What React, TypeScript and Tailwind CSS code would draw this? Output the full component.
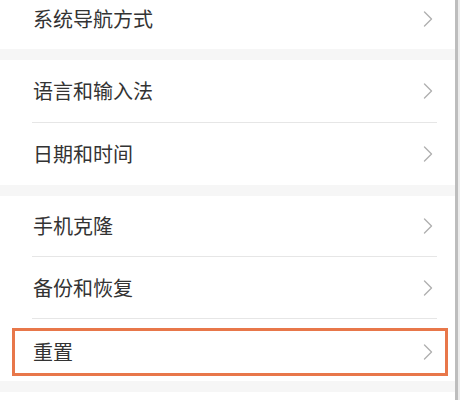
import React from "react";

const Chevron = () => (
  <svg width="10" height="16" viewBox="0 0 10 16" className="shrink-0">
    <path d="M1.5 1 L8.5 8 L1.5 15" fill="none" stroke="#b0b0b0" strokeWidth="1.4" strokeLinecap="round" strokeLinejoin="round" />
  </svg>
);

function Row({ label, h, pb = "", divider = false, children }: { label: string; h: string; pb?: string; divider?: boolean; children?: React.ReactNode }) {
  return (
    <div className="relative bg-white">
      <div className={`flex items-center justify-between pl-[33px] pr-[22px] ${h} ${pb}`}>
        <span className="text-[20px] leading-none text-[#333333]">{label}</span>
        <Chevron />
      </div>
      {divider && <div className="ml-[32px] mr-[18px] h-px bg-[#e6e6e6]" />}
      {children}
    </div>
  );
}

export default function App() {
  return (
    <div className="flex w-[460px] h-[400px] overflow-hidden bg-white" style={{ fontFamily: '"Noto Sans CJK SC", "Noto Sans", sans-serif' }}>
      <div className="flex-1 flex flex-col">
        <div className="flex items-center justify-between pl-[33px] pr-[22px] h-[49px] pb-[11px] bg-white">
          <span className="text-[20px] leading-none text-[#333333]">系统导航方式</span>
          <Chevron />
        </div>
        <div className="h-[11px] bg-[#f6f6f6]" />
        <Row label="语言和输入法" h="h-[62px]" divider />
        <Row label="日期和时间" h="h-[62px]" />
        <div className="h-[11px] bg-[#f6f6f6]" />
        <Row label="手机克隆" h="h-[60px]" divider />
        <Row label="备份和恢复" h="h-[61px]" divider />
        <Row label="重置" h="h-[62px]" pb="pt-[4px]">
          <div className="absolute left-[12px] right-[7px] top-[9px] h-[48px] border-[3px] border-[#e8774a]" />
        </Row>
        <div className="h-[11px] bg-[#f6f6f6]" />
        <div className="flex-1 bg-white" />
      </div>
      <div className="w-[3px] bg-[#bdbdbd]" />
      <div className="w-[2px] bg-[#ececec]" />
    </div>
  );
}
